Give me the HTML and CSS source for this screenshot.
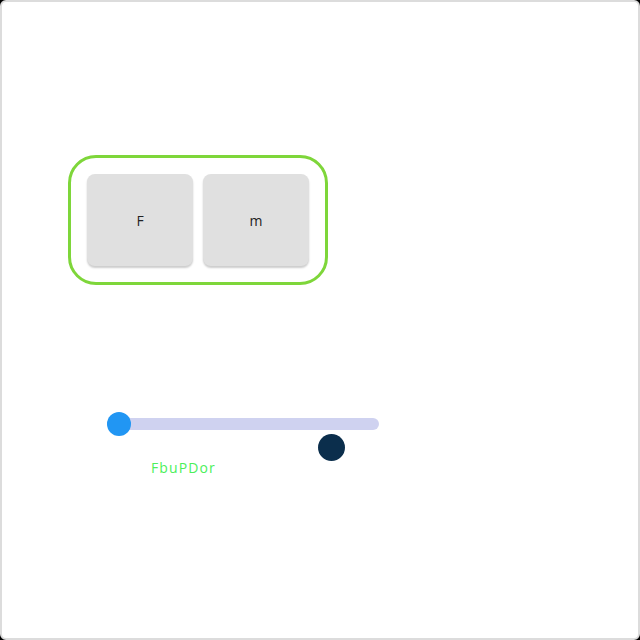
FILE: index.html
```html
<!DOCTYPE html>
<html>
<head>
<meta charset="utf-8">
<link rel="stylesheet" href="styles.css">
</head>
<body>
<div class="frame">
  <div class="group">
    <button class="key">F</button>
    <button class="key">m</button>
  </div>
  <div class="slider">
    <div class="rail">
      <div class="track"></div>
      <div class="thumb"></div>
      <div class="knob"></div>
    </div>
    <div class="label">FbuPDor</div>
  </div>
</div>
</body>
</html>
```
FILE: styles.css
```css
html {
  background: #000;
}
body {
  margin: 0;
}
.frame {
  width: 640px;
  height: 640px;
  box-sizing: border-box;
  border: 2px solid #dcdcdc;
  border-radius: 6px;
  background: #fff;
  overflow: hidden;
  font-family: "Open Sans", "Liberation Sans", sans-serif;
}
.group {
  display: inline-flex;
  gap: 10px;
  margin: 153px 0 0 66px;
  padding: 16px;
  border: 3px solid #7ed63a;
  border-radius: 28px;
}
.key {
  width: 106px;
  height: 92px;
  border: none;
  border-radius: 8px;
  background: #e0e0e0;
  box-shadow: 0 2px 2px rgba(0, 0, 0, 0.2);
  font-family: "Open Sans", "Liberation Sans", sans-serif;
  font-size: 14px;
  color: #222;
  padding: 0;
}
.slider {
  margin: 127px 0 0 105px;
}
.rail {
  position: relative;
  width: 272px;
  height: 24px;
  display: flex;
  align-items: center;
}
.track {
  flex: 1;
  height: 12px;
  border-radius: 6px;
  background: #cfd2f0;
}
.thumb {
  position: absolute;
  left: 0;
  top: 0;
  width: 24px;
  height: 24px;
  border-radius: 50%;
  background: #2196f3;
}
.knob {
  position: absolute;
  left: 211px;
  top: 22px;
  width: 27px;
  height: 27px;
  border-radius: 50%;
  background: #0b2e4c;
}
.label {
  margin: 22px 0 0 44px;
  font-size: 14px;
  line-height: 20px;
  color: #4cef5a;
  letter-spacing: 1.1px;
}
```
